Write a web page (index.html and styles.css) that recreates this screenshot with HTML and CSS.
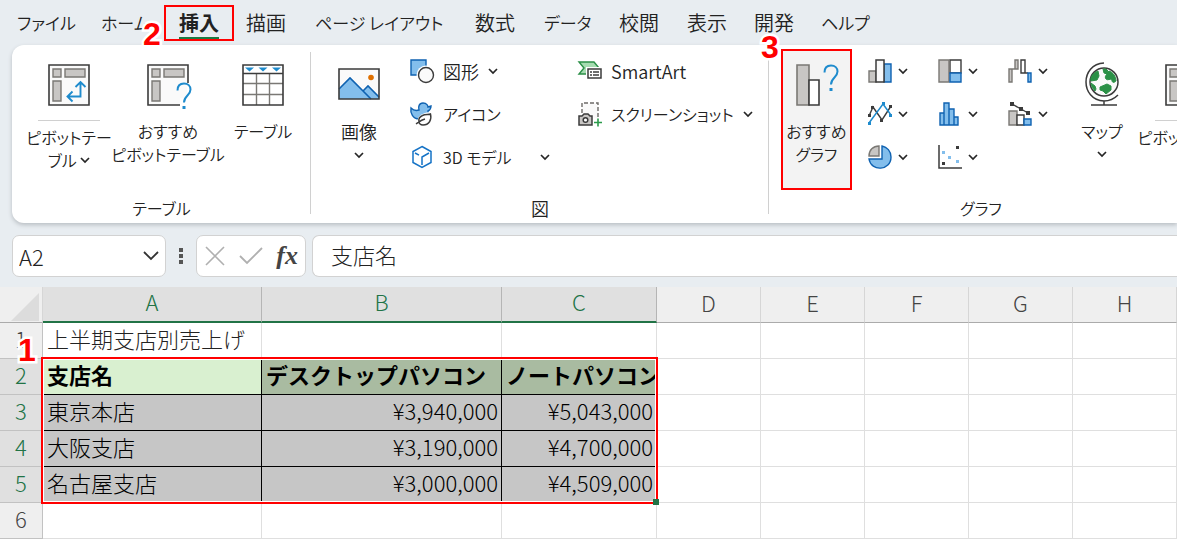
FILE: index.html
```html
<!DOCTYPE html>
<html lang="ja">
<head>
<meta charset="utf-8">
<title>上半期支店別売上げ</title>
<link rel="stylesheet" href="styles.css">
</head>
<body>
<svg class="defs" aria-hidden="true">
  <symbol id="chev" viewBox="0 0 10 10"><path d="M1 3l4 4 4-4" fill="none" stroke="#262626" stroke-width="1.700"/></symbol>
  <symbol id="pivot" viewBox="0 0 42 42"><path d="M1 1h40v40H1z" fill="#fafafa" stroke="#3b3b3b" stroke-width="1.600"/><path d="M5 5h8v8H5zM17 5h20v8H17zM5 17h8v20H5z" fill="#c8c6c4" stroke="#7a7874" stroke-width="1.400"/></symbol>
  <symbol id="question" viewBox="0 0 16 28"><path d="M1.500 8.500C1.500 4 4 1.500 8 1.500s6.500 2.500 6.500 6c0 6-6.500 6-6.500 13" fill="none" stroke="#1e8bcd" stroke-width="2"/><path d="M6.500 24h3v3h-3z" fill="#1e8bcd"/></symbol>
</svg>

<nav class="tabs">
  <button class="kana">ファイル</button>
  <button class="kana">ホーム<span class="step step-2">2</span></button>
  <button class="active"><span>挿入</span></button>
  <button>描画</button>
  <button class="kana">ページ レイアウト</button>
  <button>数式</button>
  <button class="kana">データ</button>
  <button>校閲</button>
  <button>表示</button>
  <button>開発</button>
  <button class="kana">ヘルプ</button>
</nav>

<main>
<div class="ribbon">
  <section class="group group-tables">
    <div class="tools">
      <button class="big kana split"><svg class="icon"><use href="#pivot"/><path d="M20 32.500h12.500V18M27.500 23l5-5 5 5M24.500 27.500l-5 5 5 5" fill="none" stroke="#1e8bcd" stroke-width="1.900"/></svg><span class="rule"></span><span>ピボットテー<br>ブル <svg class="chev"><use href="#chev"/></svg></span></button>
      <button class="big kana"><svg class="icon"><use href="#pivot" width="42" height="42"/><path d="M28 19h18v26H33V34h-5z" fill="#fff"/><path d="M28 19h12v15H28z" fill="#fafafa"/><use href="#question" x="29" y="18" width="16" height="28"/></svg><span>おすすめ<br>ピボットテーブル</span></button>
      <button class="big kana"><svg class="icon"><path d="M1 1h40v40H1z" fill="#fff"/><path d="M1 19.500h40M1 30.500h40M14.500 10v31M27.500 10v31" stroke="#7a7874" stroke-width="1.400"/><path d="M1 1h40v40H1zM1 9.500h40" fill="none" stroke="#3b3b3b" stroke-width="1.600"/><path d="M3 3.500h9l-4.500 4zM16.500 3.500h9l-4.500 4zM30 3.500h9l-4.500 4z" fill="#1e8bcd"/></svg><span>テーブル</span></button>
    </div>
    <h2 class="kana">テーブル</h2>
  </section>

  <section class="group group-illustrations">
    <div class="tools">
      <button class="big"><svg class="icon"><path d="M1 5h40v30H1z" fill="#fafafa"/><path d="M1 25l11-11 13 13 5-5 11 11v2H1z" fill="#83beec"/><path d="M1 25l11-11 21 21M25 27l5-5 11 11" fill="none" stroke="#0f62b1" stroke-width="1.600"/><path d="M1 5h40v30H1z" fill="none" stroke="#3b3b3b" stroke-width="1.600"/><circle cx="33" cy="13.500" r="2.800" fill="#df7000"/></svg><span>画像<br><svg class="chev"><use href="#chev"/></svg></span></button>
      <div class="list">
        <button><svg class="small"><path d="M1 1h15v15H1z" fill="#83beec" stroke="#0f62b1" stroke-width="1.400"/><circle cx="16" cy="16" r="9.500" fill="#fff"/><circle cx="16" cy="16" r="7.500" fill="#fafafa" stroke="#3b3b3b" stroke-width="1.400"/></svg>図形 <svg class="chev"><use href="#chev"/></svg></button>
        <button class="kana"><svg class="small"><path d="M1 6c2 2 5 3 8 2C8 5 9 1 13 1c4 0 5 3 5 4l3-1c0 3-1 4-3 5 1 5-3 8-9 8C3 17 0 11 1 6z" fill="#83beec" stroke="#0f62b1" stroke-width="1.400"/><path d="M24 10v9c-1 7-12 8-16 5-3-8 3-15 16-14z" fill="#fff"/><path d="M20.500 12c-2 1-5 0-8 1.500C7 16 8 23 13 23c6 0 9-5 7.500-11zM6 22c3-2 5-4 9-5" fill="#fff" stroke="#3b3b3b" stroke-width="1.400"/></svg>アイコン</button>
        <button class="kana spread"><svg class="small"><path d="M12 1.500l9 5v11l-9 5-9-5v-11z" fill="#fff" stroke="#1573c6" stroke-width="1.500"/><path d="M5 8l4 2.200M19 8l-7 4v8" fill="none" stroke="#1573c6" stroke-width="1.500"/></svg>3D モデル <svg class="chev"><use href="#chev"/></svg></button>
      </div>
      <div class="list">
        <button><svg class="small"><path d="M1 3h15l5 6-5 6H1l5-6z" fill="#a6dcb1" stroke="#2b8f47" stroke-width="1.400"/><path d="M8 8h16v14H8z" fill="#fff"/><path d="M10 10h13v9H10z" fill="#fff" stroke="#3b3b3b" stroke-width="1.500"/><path d="M12 13h2m1 0h6m-9 3h2m1 0h6" stroke="#3b3b3b" stroke-width="1.300"/></svg>SmartArt</button>
        <button class="kana"><svg class="small"><path d="M4 11V1h16v16" fill="#fafafa" stroke="#6d6b68" stroke-width="1.400" stroke-dasharray="4 2"/><path d="M1 14h3l2-2h4l2 2h2v9H1z" fill="#c8c6c4" stroke="#3b3b3b" stroke-width="1.500"/><circle cx="7.500" cy="18" r="2.300" fill="#fff" stroke="#3b3b3b" stroke-width="1.500"/><path d="M16 20.500h8M20 16.500v8" stroke="#2b9b4b" stroke-width="1.600"/></svg>スクリーンショット <svg class="chev"><use href="#chev"/></svg></button>
      </div>
    </div>
    <h2>図</h2>
  </section>

  <section class="group group-charts">
    <div class="tools">
      <button class="big kana highlighted"><svg class="icon icon-chart"><path d="M1 1h12v40H1z" fill="#c8c6c4" stroke="#7a7874" stroke-width="1.600"/><path d="M13 16h10v25H13z" fill="#fff" stroke="#3b3b3b" stroke-width="1.600"/><use href="#question" x="27" y="0" width="16" height="28"/></svg><span>おすすめ<br>グラフ</span></button>
      <div class="charts">
        <button aria-label="縦棒"><svg class="small"><path d="M1 12h7v11H1z" fill="#c8c6c4" stroke="#7a7874" stroke-width="1.400"/><path d="M16 5h7v18h-7z" fill="#83beec" stroke="#0f62b1" stroke-width="1.400"/><path d="M8 1h8v22H8z" fill="#fafafa" stroke="#3b3b3b" stroke-width="1.500"/></svg><svg class="chev"><use href="#chev"/></svg></button>
        <button aria-label="階層構造"><svg class="small"><path d="M12 1h11v13H12z" fill="#fff" stroke="#3b3b3b" stroke-width="1.400"/><path d="M1 1h10v22H1z" fill="#c8c6c4" stroke="#7a7874" stroke-width="1.400"/><path d="M12 14h11v9H12z" fill="#83beec" stroke="#0f62b1" stroke-width="1.400"/></svg><svg class="chev"><use href="#chev"/></svg></button>
        <button aria-label="ウォーターフォール"><svg class="small"><path d="M1 10h3v13H1zM7 1h3v9H7zM4 10h3" fill="#c8c6c4" stroke="#7a7874" stroke-width="1.400"/><path d="M13 1h4v13h-4zM17 14h3" fill="#fff" stroke="#3b3b3b" stroke-width="1.400"/><path d="M20 14h3v9h-3z" fill="#83beec" stroke="#0f62b1" stroke-width="1.400"/></svg><svg class="chev"><use href="#chev"/></svg></button>
        <button aria-label="折れ線"><svg class="small"><path d="M1 14L5 5l9 13 9-14" fill="none" stroke="#3b3b3b" stroke-width="1.400"/><path d="M1 21L15 2l8 11" fill="none" stroke="#1e8bcd" stroke-width="1.500"/><path d="M0 12h3v3H0zM3 4h3v3H3zM12 17h3v3h-3zM21 3h3v3h-3z" fill="#3b3b3b"/><path d="M0 20h3v3H0zM14 0h3v3h-3zM21 12h3v3h-3z" fill="#1e8bcd"/></svg><svg class="chev"><use href="#chev"/></svg></button>
        <button aria-label="統計"><svg class="small"><path d="M2 11h4v12H2zM6 1h5v22H6zM11 7h5v16h-5zM16 15h4v8h-4z" fill="#83beec" stroke="#0f62b1" stroke-width="1.400"/></svg><svg class="chev"><use href="#chev"/></svg></button>
        <button aria-label="組み合わせ"><svg class="small"><path d="M1 9h8v14H1z" fill="#c8c6c4" stroke="#7a7874" stroke-width="1.400"/><path d="M9 13h7v10H9z" fill="#fff" stroke="#3b3b3b" stroke-width="1.400"/><path d="M16 17h7v6h-7z" fill="#83beec" stroke="#0f62b1" stroke-width="1.400"/><path d="M4 2l9 5 7 4" fill="none" stroke="#3b3b3b" stroke-width="1.400"/><path d="M2 0h4v4H2zM11 5h4v4h-4zM18 9h4v4h-4z" fill="#3b3b3b"/></svg><svg class="chev"><use href="#chev"/></svg></button>
        <button aria-label="円"><svg class="small"><path d="M1 11C1 5 5 1 11 1v10z" fill="#c8c6c4" stroke="#7a7874" stroke-width="1.400"/><path d="M14 1c5 1 9 5 9 11 0 14-20 15-22 2h13z" fill="#83beec" stroke="#0f62b1" stroke-width="1.400"/></svg><svg class="chev"><use href="#chev"/></svg></button>
        <button aria-label="散布図"><svg class="small"><path d="M1 0v23h23" fill="none" stroke="#3b3b3b" stroke-width="1.500"/><path d="M18 1h3v3h-3zM4 17h3v3H4z" fill="#3b3b3b"/><path d="M4 6h3v3H4zM10 11h3v3h-3zM18 15h3v3h-3z" fill="#83beec"/></svg><svg class="chev"><use href="#chev"/></svg></button>
      </div>
      <button class="big kana map"><svg class="icon"><circle cx="23" cy="18" r="14" fill="#fafafa" stroke="#3b3b3b" stroke-width="1.500"/><path d="M22 5l1 4 3 1 1-3-2-2zM27 8c-1 3-4 4-2 7 2 2 4-1 6 1 0 3 2 3 4 1 0-4-3-9-7-10zM10 17l6-1 2-4-1-5c-5 2-8 6-7 10zm9 6l7-3 4 2v4l-5 4-3-3-3-1zM10 19l4 3 1 3-1 2c-2-2-4-5-4-8z" fill="#2b9147" stroke="#2b9147"/><path d="M23 -1C-1 0-1 36 23 37c6 0 10-2 14-6M23 37v4M10 41h26" fill="none" stroke="#3b3b3b" stroke-width="1.500"/></svg><span>マップ<br><svg class="chev"><use href="#chev"/></svg></span></button>
      <button class="big kana split"><svg class="icon"><use href="#pivot"/></svg><span class="rule"></span><span>ピボットグラフ</span></button>
    </div>
    <h2 class="kana">グラフ</h2>
  </section>
  <span class="step step-3">3</span>
</div>

<div class="formula-bar">
  <div class="box name-box"><input aria-label="名前ボックス" value="A2"><button aria-label="名前の一覧"><svg width="16" height="10"><path d="M1 1l7 7 7-7" fill="none" stroke="#333" stroke-width="1.800"/></svg></button></div>
  <svg class="grip" width="4" height="16"><path d="M0 0h4v4H0zM0 6h4v4H0zM0 12h4v4H0z" fill="#555"/></svg>
  <div class="box entry">
    <button aria-label="キャンセル"><svg width="20" height="20"><path d="M1 1l18 18M19 1L1 19" stroke="#b0b0b0" stroke-width="1.600"/></svg></button>
    <button aria-label="入力"><svg width="24" height="20"><path d="M1 10l7 7L23 2" fill="none" stroke="#b0b0b0" stroke-width="1.800"/></svg></button>
    <button class="fx" aria-label="関数の挿入">fx</button>
  </div>
  <input class="box formula" aria-label="数式バー" value="支店名">
</div>

<div class="sheet">
  <table>
    <colgroup><col class="c-head"><col class="c-a"><col class="c-b"><col class="c-c"><col class="c-d"><col class="c-d"><col class="c-d"><col class="c-d"><col></colgroup>
    <thead>
      <tr><th class="corner"><svg width="28" height="28"><path d="M28 0v28H0z" fill="#dcdcdc"/></svg></th><th class="on">A</th><th class="on">B</th><th class="on">C</th><th>D</th><th>E</th><th>F</th><th>G</th><th>H</th></tr>
    </thead>
    <tbody>
      <tr><th>1</th><td>上半期支店別売上げ</td><td></td><td></td><td></td><td></td><td></td><td></td><td></td></tr>
      <tr class="sel title"><th class="on">2</th><td class="cursor">支店名</td><td>デスクトップパソコン</td><td>ノートパソコン</td><td></td><td></td><td></td><td></td><td></td></tr>
      <tr class="sel"><th class="on">3</th><td>東京本店</td><td>¥3,940,000</td><td>¥5,043,000</td><td></td><td></td><td></td><td></td><td></td></tr>
      <tr class="sel"><th class="on">4</th><td>大阪支店</td><td>¥3,190,000</td><td>¥4,700,000</td><td></td><td></td><td></td><td></td><td></td></tr>
      <tr class="sel"><th class="on">5</th><td>名古屋支店</td><td>¥3,000,000</td><td>¥4,509,000</td><td></td><td></td><td></td><td></td><td></td></tr>
      <tr><th>6</th><td></td><td></td><td></td><td></td><td></td><td></td><td></td><td></td></tr>
    </tbody>
  </table>
  <div class="frame"></div>
  <span class="step step-1">1</span>
</div>
</main>
</body>
</html>
```
FILE: styles.css
```css
* { box-sizing: border-box; }
body {
  margin: 0;
  overflow: hidden;
  background: #e8edf1;
  color: #222;
  font-family: "Noto Sans CJK JP", sans-serif;
  font-size: 18px;
  font-weight: 350;
}
button, input {
  margin: 0;
  padding: 0;
  border: 0;
  background: none;
  color: inherit;
  font: inherit;
  white-space: nowrap;
}
svg { display: block; flex: none; overflow: visible; }
.defs { position: absolute; width: 0; height: 0; }
button.kana { font-size: 16px; }

.tabs {
  display: grid;
  grid-template-columns: 84px 63px 70px 69px 160px 69px 75px 68px 67px 67px auto;
  justify-content: start;
  height: 45px;
  padding: 5px 0 4px 17px;
  font-size: 20px;
  font-feature-settings: "palt";
}
.tabs button { position: relative; text-align: left; line-height: 36px; }
.tabs .kana { font-size: 17px; }
.tabs .active { width: 70px; border: 2px solid #f00; font-weight: 700; text-align: center; line-height: 32px; }
.tabs .active span { display: inline-block; height: 32px; border-bottom: 2px solid #1a7a43; }
.tabs button:nth-child(n+4) { padding-left: 12px; }

.step {
  position: absolute;
  z-index: 3;
  color: #f00;
  font: 700 32px/32px "Liberation Sans", Arial, sans-serif;
  -webkit-text-stroke: 5px #fff;
  paint-order: stroke fill;
}
.step-1 { left: 18px; top: 47px; }
.step-2 { left: 42px; top: 13px; }
.step-3 { left: 749px; top: -14px; }

.ribbon {
  position: relative;
  display: flex;
  height: 178px;
  margin-left: 12px;
  overflow-x: clip;
  border-radius: 12px 0 0 12px;
  background: #fff;
  box-shadow: 0 2px 4px #b9bec3;
  font-feature-settings: "palt";
}
.group { position: relative; flex: none; display: flex; flex-direction: column; justify-content: space-between; }
.group + .group::before { content: ""; position: absolute; left: -1px; top: 7px; bottom: 9px; width: 1px; background: #d0d0d0; }
.group-tables { width: 299px; }
.group-illustrations { width: 458px; }
.group-charts { width: 424px; }
.group h2 { margin: 0; font-size: 18px; font-weight: 350; line-height: 30px; text-align: center; }
.group h2.kana { font-size: 16px; }
.tools { display: flex; align-items: flex-start; }
.group-tables .tools { display: grid; grid-template-columns: 98px 100px 90px; padding-left: 8px; }
.big { flex: none; display: flex; flex-direction: column; align-items: center; padding-top: 19px; line-height: 23px; }
.icon { width: 42px; height: 42px; margin-bottom: 14px; }
.rule { width: 62px; height: 1px; background: #d0d0d0; margin-bottom: 5px; }
.chev { display: inline-block; width: 10px; height: 10px; }
.big br + .chev { vertical-align: 2px; }

.group-illustrations .big { width: 99px; padding-right: 3px; }
.list { display: grid; grid-template-rows: repeat(3, 43px); padding-top: 4px; }
.list:nth-child(2) { width: 168px; }
.list button { display: flex; align-items: center; gap: 9px; }
.spread .chev { margin-left: 20px; }
.small { width: 24px; height: 24px; }

.group-charts .tools { padding-left: 12px; }
.highlighted { width: 71px; height: 141px; margin-top: 4px; padding-top: 13px; border: 2px solid #f00; background: #f3f3f3; }
.charts { flex: none; display: grid; grid-template: repeat(3, 43px) / repeat(3, 70px); margin-left: 16px; padding-top: 4px; }
.charts button { display: flex; align-items: center; gap: 6px; }
.map { width: 48px; }
.group-charts .split { width: 120px; }

.formula-bar { display: flex; align-items: center; height: 64px; padding: 2px 0 0 12px; }
.box { height: 42px; border: 1px solid #d2d2d2; border-radius: 7px; background: #fff; font-size: 22px; font-weight: 300; }
.name-box { display: flex; align-items: center; width: 154px; padding: 0 6px; }
.name-box input { flex: 1; min-width: 0; }
.grip { margin: 0 13px; }
.entry { display: flex; align-items: center; justify-content: space-between; width: 110px; padding: 0 7px 0 8px; }
.fx { font: italic 700 26px/30px "Liberation Serif", serif; color: #444; }
.formula { flex: 1; min-width: 0; margin-left: 6px; padding: 0 0 4px 18px; border-right: 0; border-radius: 7px 0 0 7px; }

.sheet { position: relative; background: #fff; }
table { width: 100%; table-layout: fixed; border-collapse: separate; border-spacing: 0; font-size: 22px; font-weight: 300; }
.c-head { width: 43px; }
.c-a { width: 219px; }
.c-b { width: 240px; }
.c-c { width: 155px; }
.c-d { width: 104px; }
th, td { height: 36px; padding: 0 3px 5px 4px; border: 0 solid #dfdfdf; border-width: 0 1px 1px 0; line-height: 29px; white-space: nowrap; overflow: hidden; }
th { padding: 0 0 5px; border-color: #c2c2c2; background: #efefef; color: #444; font-weight: 300; }
thead th { border-right-color: #d6d6d6; border-bottom-color: #ababab; }
.corner svg { margin: 5px 0 0 11px; }
.corner { padding: 0; }
th.on { background: #e0e0e0; color: #217346; }
thead th.on { border-right-color: #b5b5b5; border-bottom: 2px solid #217346; }
.sel td:nth-child(-n+4) { border-color: #000; background: #c6c6c6; color: #000; }
.sel td:nth-child(n+3) { text-align: right; }
.title td:nth-child(-n+4) { background: #a9bba1; font-weight: 700; text-align: left; }
.title td.cursor { background: #d9f0d0; }
.frame { position: absolute; left: 41px; top: 70px; width: 617px; height: 147px; border: 2px solid #f00; box-shadow: inset 0 0 0 1px #fff; }
.frame::after { content: ""; position: absolute; right: -3px; bottom: -3px; width: 6px; height: 6px; background: #217346; }
```
